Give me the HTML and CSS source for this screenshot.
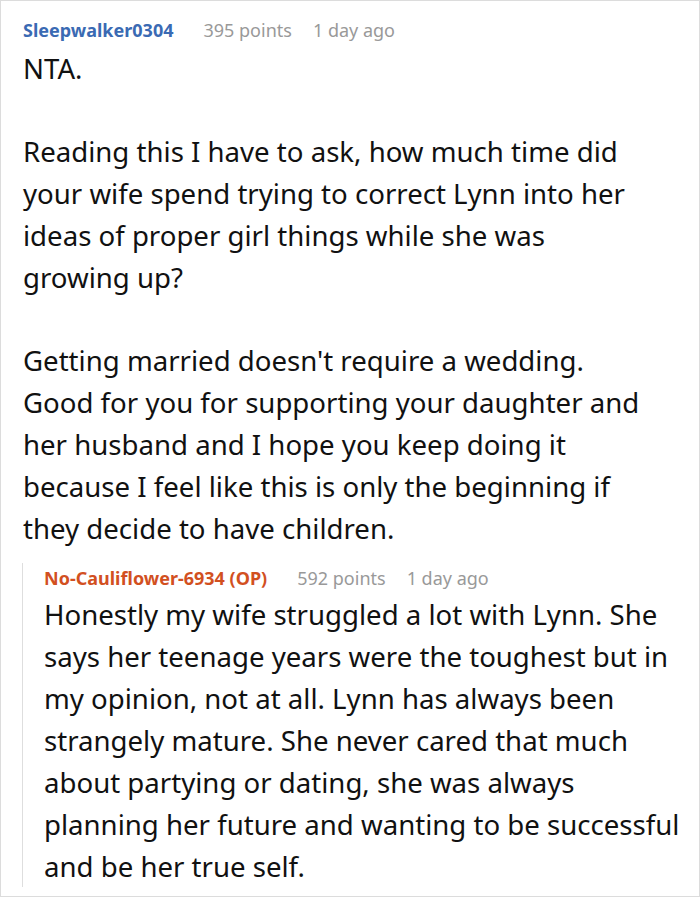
FILE: index.html
```html
<!DOCTYPE html>
<html>
<head>
<meta charset="utf-8">
<link rel="stylesheet" href="styles.css">
</head>
<body>
<div class="thread">
  <div class="comment">
    <div class="meta">
      <span class="author">Sleepwalker0304</span>
      <span class="info">395 points</span>
      <span class="info">1 day ago</span>
    </div>
    <div class="body main-body">
      <p>NTA.</p>
      <p>Reading this I have to ask, how much time did your wife spend trying to correct Lynn into her ideas of proper girl things while she was growing up?</p>
      <p>Getting married doesn't require a wedding. Good for you for supporting your daughter and her husband and I hope you keep doing it because I feel like this is only the beginning if they decide to have children.</p>
    </div>
    <div class="reply">
      <div class="meta">
        <span class="author op">No-Cauliflower-6934 (OP)</span>
        <span class="info">592 points</span>
        <span class="info">1 day ago</span>
      </div>
      <div class="body">
        <p>Honestly my wife struggled a lot with Lynn. She says her teenage years were the toughest but in my opinion, not at all. Lynn has always been strangely mature. She never cared that much about partying or dating, she was always planning her future and wanting to be successful and be her true self.</p>
      </div>
    </div>
  </div>
</div>
</body>
</html>
```
FILE: styles.css
```css
html, body {
  margin: 0;
  padding: 0;
  background: #fff;
}
.thread {
  width: 700px;
  height: 897px;
  box-sizing: border-box;
  border: 1px solid #dcdcdc;
  overflow: hidden;
  font-family: "Noto Sans", "Open Sans", sans-serif;
  color: #111;
}
.comment {
  padding: 14px 0 0 22px;
}
.meta {
  display: flex;
  gap: 21px;
  font-size: 18px;
  line-height: 30px;
  height: 30px;
}
.author {
  font-weight: 700;
  color: #3a6ab3;
  margin-right: 9px;
}
.author.op {
  color: #d2501f;
}
.info {
  color: #999;
}
.body {
  font-size: 27.6px;
  line-height: 42px;
}
.main-body {
  margin: 2px 45px 0 0;
}
.body p {
  margin: 0 0 41px 0;
}
.body p:last-child {
  margin-bottom: 0;
}
.reply {
  margin: 30px 16px 0 -1px;
  border-left: 1px solid #dedede;
  padding-left: 21px;
}
.reply .meta {
  margin-top: -16px;
}
.reply .body {
  margin-bottom: -8px;
}
```
